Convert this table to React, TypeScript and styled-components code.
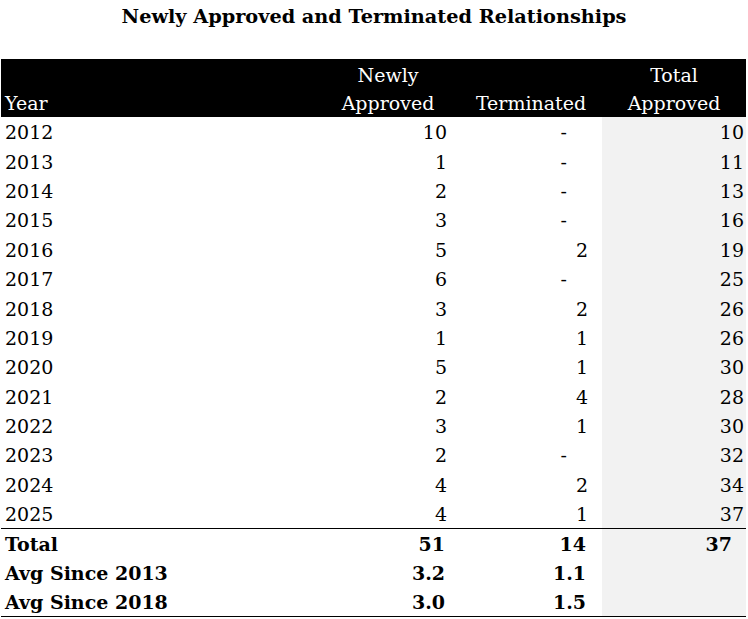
import React from "react";
import styled, { createGlobalStyle } from "styled-components";

const Global = createGlobalStyle`
  html, body { margin: 0; padding: 0; background: #ffffff; }
  body { font-family: "DejaVu Serif", "Liberation Serif", serif; color: #000; }
`;

const Page = styled.div`
  width: 748px;
  display: flex;
  flex-direction: column;
`;

const Title = styled.h1`
  margin: 0;
  height: 59px;
  padding-top: 3px;
  box-sizing: border-box;
  text-align: center;
  font-size: 19.3px;
  font-weight: bold;
  line-height: 28px;
`;

const Table = styled.table`
  margin-left: 1px;
  width: 745px;
  border-collapse: collapse;
  table-layout: fixed;
  font-size: 19px;
`;

const HeadCell = styled.th<{ $align: "left" | "center"; $pl: number; $pr: number }>`
  background: #000;
  color: #fff;
  font-weight: normal;
  vertical-align: bottom;
  line-height: 28px;
  height: 58px;
  box-sizing: border-box;
  text-align: ${(p) => p.$align};
  padding: 2px ${(p) => p.$pr}px 0 ${(p) => p.$pl}px;
  white-space: nowrap;
`;

const Row = styled.tr<{ $bottomRule?: boolean }>`
  height: 29.4px;
  ${(p) => (p.$bottomRule ? "border-bottom: 1.5px solid #000;" : "")}
`;

const Cell = styled.td<{ $align: "left" | "right"; $pl: number; $pr: number; $shade?: boolean; $bold?: boolean }>`
  padding: 2px ${(p) => p.$pr}px 0 ${(p) => p.$pl}px;
  text-align: ${(p) => p.$align};
  background: ${(p) => (p.$shade ? "#f2f2f2" : "transparent")};
  font-weight: ${(p) => (p.$bold ? "bold" : "normal")};
  line-height: 27px;
  white-space: nowrap;
`;

const Dash = styled.span`
  display: inline-block;
  margin-right: 21px;
`;

type R = { year: string; newly: number; term: number | null; total: number };

const rows: R[] = [
  { year: "2012", newly: 10, term: null, total: 10 },
  { year: "2013", newly: 1, term: null, total: 11 },
  { year: "2014", newly: 2, term: null, total: 13 },
  { year: "2015", newly: 3, term: null, total: 16 },
  { year: "2016", newly: 5, term: 2, total: 19 },
  { year: "2017", newly: 6, term: null, total: 25 },
  { year: "2018", newly: 3, term: 2, total: 26 },
  { year: "2019", newly: 1, term: 1, total: 26 },
  { year: "2020", newly: 5, term: 1, total: 30 },
  { year: "2021", newly: 2, term: 4, total: 28 },
  { year: "2022", newly: 3, term: 1, total: 30 },
  { year: "2023", newly: 2, term: null, total: 32 },
  { year: "2024", newly: 4, term: 2, total: 34 },
  { year: "2025", newly: 4, term: 1, total: 37 },
];

const summary = [
  { label: "Total", newly: "51", term: "14", total: "37" },
  { label: "Avg Since 2013", newly: "3.2", term: "1.1", total: "" },
  { label: "Avg Since 2018", newly: "3.0", term: "1.5", total: "" },
];

export default function App() {
  return (
    <Page>
      <Global />
      <Title>Newly Approved and Terminated Relationships</Title>
      <Table>
        <colgroup>
          <col style={{ width: 300 }} />
          <col style={{ width: 159 }} />
          <col style={{ width: 142 }} />
          <col style={{ width: 144 }} />
        </colgroup>
        <thead>
          <tr>
            <HeadCell $align="left" $pl={4} $pr={0}>Year</HeadCell>
            <HeadCell $align="center" $pl={28} $pr={13}>Newly<br />Approved</HeadCell>
            <HeadCell $align="center" $pl={14} $pr={14}>Terminated</HeadCell>
            <HeadCell $align="center" $pl={0} $pr={0}>Total<br />Approved</HeadCell>
          </tr>
        </thead>
        <tbody>
          {rows.map((r, i) => (
            <Row key={r.year} $bottomRule={i === rows.length - 1}>
              <Cell $align="left" $pl={4} $pr={0}>{r.year}</Cell>
              <Cell $align="right" $pl={0} $pr={13}>{r.newly}</Cell>
              <Cell $align="right" $pl={0} $pr={14}>{r.term === null ? <Dash>-</Dash> : r.term}</Cell>
              <Cell $align="right" $pl={0} $pr={2} $shade>{r.total}</Cell>
            </Row>
          ))}
          {summary.map((s, i) => (
            <Row key={s.label} $bottomRule={i === summary.length - 1}>
              <Cell $align="left" $pl={4} $pr={0} $bold>{s.label}</Cell>
              <Cell $align="right" $pl={0} $pr={15} $bold>{s.newly}</Cell>
              <Cell $align="right" $pl={0} $pr={16} $bold>{s.term}</Cell>
              <Cell $align="right" $pl={0} $pr={14} $shade $bold>{s.total}</Cell>
            </Row>
          ))}
        </tbody>
      </Table>
    </Page>
  );
}
